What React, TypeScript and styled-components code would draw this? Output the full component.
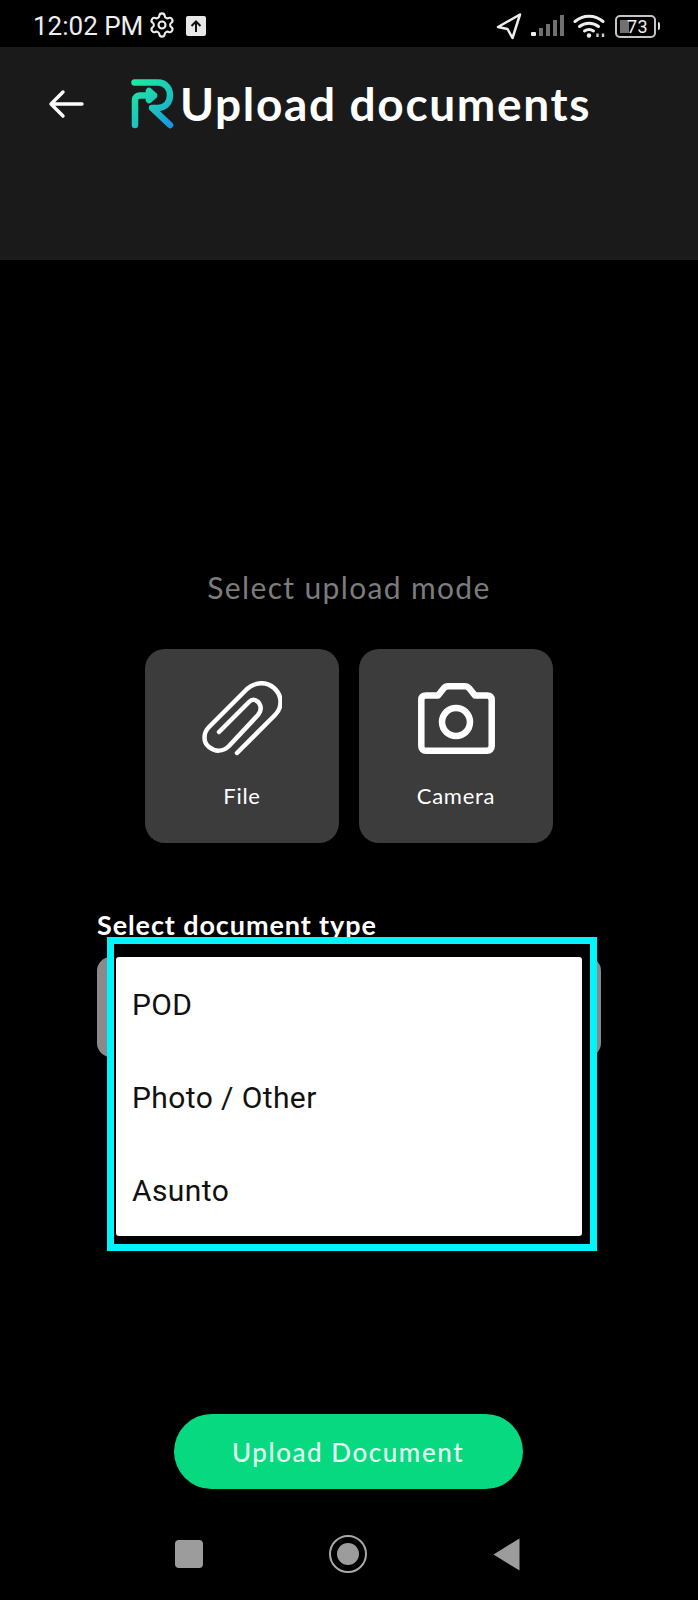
import styled, {createGlobalStyle} from "styled-components";
import {Settings} from "lucide-react";

const GlobalStyle = createGlobalStyle`
    html, body {
        margin: 0;
        padding: 0;
        background: #000;
    }
`

const UploadBoxIcon = () => (
    <svg width="20" height="20" viewBox="0 0 20 20">
        <rect width="20" height="20" rx="2" fill="#e8e8e8"/>
        <path d="M10 16V6M5.500 10 10 5.500l4.500 4.500" fill="none" stroke="#111" strokeWidth="2"/>
    </svg>
)

const LocationIcon = () => (
    <svg width="26" height="28" viewBox="0 0 26 28" fill="none" stroke="#eee" strokeWidth="2.500" strokeLinejoin="round">
        <path d="M24 2.500 2 15l9.500 2 5 9z"/>
    </svg>
)

const SignalIcon = () => (
    <svg width="33" height="22" viewBox="0 0 33 22">
        <rect x="0" y="17" width="5" height="4" rx="1" fill="#eee"/>
        <rect x="8" y="13" width="4" height="8" fill="#707070"/>
        <rect x="15" y="9" width="4" height="12" fill="#707070"/>
        <rect x="22" y="5" width="4" height="16" fill="#707070"/>
        <rect x="29" y="0" width="4" height="21" fill="#707070"/>
    </svg>
)

const WifiIcon = () => (
    <svg width="33" height="24" viewBox="0 0 33 24" fill="none" stroke="#eee" strokeWidth="3" strokeLinecap="round">
        <path d="M2 7.500C10 .5 22 .5 30 7.500"/>
        <path d="M6.500 12.500C12 8 20 8 25.500 12.500"/>
        <path d="M11.500 17c3-2 6-2 9 0"/>
        <circle cx="16" cy="21.500" r="2.200" fill="#eee" stroke="none"/>
        <path d="M24.500 19.500v3.500M30 19.500v3.500" strokeWidth="2.400" stroke="#ccc" strokeLinecap="butt"/>
    </svg>
)

const LogoIcon = () => (
    <svg width="46" height="52" viewBox="8 7 46 52" fill="none">
        <defs>
            <linearGradient id="logoGrad" gradientUnits="userSpaceOnUse" x1="12" y1="10" x2="52" y2="56">
                <stop offset="0" stopColor="#1fe8a0"/>
                <stop offset="0.55" stopColor="#1cc6bc"/>
                <stop offset="1" stopColor="#1a8fe8"/>
            </linearGradient>
        </defs>
        <path
            d="M13.500 11.500H37C53 11.500 53 37 37 37H31L49 54M14 54V29C14 26 16 24.500 19 24.500H33M28 20L33 24.500L28 29"
            stroke="url(#logoGrad)"
            strokeWidth="6.500"
            strokeLinecap="round"
            strokeLinejoin="round"
        />
    </svg>
)

const PaperclipIcon = () => (
    <svg width="80" height="75" viewBox="-1 -1 80 75" fill="none" stroke="#fff" strokeWidth="4.500" strokeLinecap="round" strokeLinejoin="round">
        <path d="M34 71 72 33C80 25 79 13 71 6 63 -1 52 0 44 7L6 45C0 51 0 60 6 65 12 70 20 70 26 64L55 33C59 28 58 24 56 21 53 17 49 17 46 20L16 50"/>
    </svg>
)

const CameraIcon = () => (
    <svg width="77" height="71" viewBox="0 0 77 71" fill="none" stroke="#fff" strokeWidth="6.500" strokeLinejoin="round">
        <path d="M8 12.500H20L26 5C27 3.800 28 3.300 30 3.300H47C49 3.300 50 3.800 51 5L57 12.500H69C72 12.500 73.700 14 73.700 17V63C73.700 66 72 67.700 69 67.700H8C5 67.700 3.300 66 3.300 63V17C3.300 14 5 12.500 8 12.500Z"/>
        <circle cx="38" cy="39" r="14"/>
    </svg>
)

const BackArrow = () => (
    <svg width="36" height="30" viewBox="0 0 36 30" fill="none" stroke="#fff" strokeWidth="3.400" strokeLinecap="round" strokeLinejoin="round">
        <path d="M34 15H3M15 3 3 15l12 12"/>
    </svg>
)

const App = () => {
    return (
        <Page>
            <GlobalStyle/>
            <StatusBar>
                <StatusGroup>
                    <Time>12:02 PM</Time>
                    <GearIcon size={28} strokeWidth={1.8}/>
                    <UploadBoxIcon/>
                </StatusGroup>
                <StatusIcons>
                    <LocationIcon/>
                    <SignalIcon/>
                    <WifiIcon/>
                    <Battery>
                        <BatteryBody>
                            <BatteryLevel/>
                            <BatteryText>73</BatteryText>
                        </BatteryBody>
                        <BatteryCap/>
                    </Battery>
                </StatusIcons>
            </StatusBar>
            <Header>
                <BackArrow/>
                <TitleWrap>
                    <LogoIcon/>
                    <Title>Upload documents</Title>
                </TitleWrap>
            </Header>
            <Main>
                <ModeLabel>Select upload mode</ModeLabel>
                <ModeRow>
                    <ModeCard>
                        <IconSlot><PaperclipIcon/></IconSlot>
                        <ModeName>File</ModeName>
                    </ModeCard>
                    <ModeCard>
                        <IconSlot><CameraIcon/></IconSlot>
                        <ModeName>Camera</ModeName>
                    </ModeCard>
                </ModeRow>
                <FieldSection>
                    <FieldLabel>Select document type</FieldLabel>
                    <SelectField/>
                    <Highlight/>
                    <Menu>
                        <MenuItem>POD</MenuItem>
                        <MenuItem>Photo / Other</MenuItem>
                        <MenuItem>Asunto</MenuItem>
                    </Menu>
                </FieldSection>
                <UploadButton>Upload Document</UploadButton>
            </Main>
            <NavBar>
                <NavSquare/>
                <NavCircle/>
                <svg width="27" height="33" viewBox="0 0 27 33">
                    <path d="M26.500 .5v32L.5 16.500z" fill="#9c9c9c"/>
                </svg>
            </NavBar>
        </Page>
    )
}

export default App

const Page = styled.div`
    width: 698px;
    height: 1600px;
    background: #000;
    display: flex;
    flex-direction: column;
    overflow: hidden;
`
const StatusBar = styled.div`
    height: 47px;
    display: flex;
    justify-content: space-between;
    align-items: center;
    padding: 5px 38px 0 33px;
    box-sizing: border-box;
`
const StatusGroup = styled.div`
    display: flex;
    align-items: center;
`
const GearIcon = styled(Settings)`
    color: #eee;
    margin: -2px 10px 0 5px;
`
const Time = styled.span`
    color: #eee;
    font-family: Roboto, sans-serif;
    font-size: 26px;
`
const StatusIcons = styled.div`
    display: flex;
    align-items: center;
    gap: 9px;
`
const Battery = styled.div`
    display: flex;
    align-items: center;
    gap: 2px;
`
const BatteryBody = styled.div`
    position: relative;
    width: 37px;
    height: 19px;
    border: 2px solid #c4c4c4;
    border-radius: 5px;
    display: flex;
    align-items: center;
    justify-content: center;
`
const BatteryLevel = styled.div`
    position: absolute;
    left: 3px;
    top: 3px;
    bottom: 3px;
    width: 9px;
    background: #707070;
`
const BatteryText = styled.span`
    position: relative;
    margin-left: 4px;
    color: #eee;
    font-family: Roboto, sans-serif;
    font-size: 18px;
    letter-spacing: 0.5px;
`
const BatteryCap = styled.div`
    width: 2px;
    height: 8px;
    border-radius: 0 2px 2px 0;
    background: #ddd;
`
const Header = styled.header`
    height: 213px;
    background: #1a1a1a;
    display: flex;
    align-items: flex-start;
    padding: 42px 0 0 48px;
    box-sizing: border-box;
`
const TitleWrap = styled.div`
    display: flex;
    align-items: center;
    margin: -13px 0 0 45px;
`
const Title = styled.h1`
    margin: 0 0 0 5px;
    color: #fff;
    font-family: Lato, sans-serif;
    font-size: 46px;
    font-weight: 700;
    letter-spacing: 1.65px;
    white-space: nowrap;
`
const Main = styled.main`
    flex: 1;
    display: flex;
    flex-direction: column;
    align-items: center;
    padding-top: 308px;
`
const ModeLabel = styled.div`
    color: #7c7c7c;
    font-family: Lato, sans-serif;
    font-size: 30px;
    line-height: 38px;
    letter-spacing: 1.35px;
`
const ModeRow = styled.div`
    display: flex;
    gap: 20px;
    margin-top: 43px;
`
const ModeCard = styled.div`
    width: 194px;
    height: 194px;
    border-radius: 20px;
    background: #3c3c3c;
    display: flex;
    flex-direction: column;
    align-items: center;
    padding-top: 33px;
    box-sizing: border-box;
`
const IconSlot = styled.div`
    height: 73px;
    display: flex;
    align-items: center;
    justify-content: center;
`
const ModeName = styled.span`
    margin-top: 27px;
    color: #fff;
    font-family: Lato, sans-serif;
    font-size: 22px;
    letter-spacing: 0.7px;
`
const FieldSection = styled.div`
    position: relative;
    align-self: flex-start;
    width: 504px;
    margin: 68px 0 0 97px;
`
const FieldLabel = styled.div`
    color: #fff;
    font-family: Lato, sans-serif;
    font-size: 27px;
    font-weight: 700;
    line-height: 28px;
    letter-spacing: 0.9px;
`
const SelectField = styled.div`
    height: 100px;
    margin-top: 18px;
    border-radius: 14px;
    background: #8a8a8a;
`
const Highlight = styled.div`
    position: absolute;
    left: 10px;
    top: 26px;
    width: 490px;
    height: 314px;
    border: 7px solid #00f5fa;
    background: #000;
    box-sizing: border-box;
`
const Menu = styled.ul`
    position: absolute;
    left: 19px;
    top: 46px;
    width: 466px;
    height: 279px;
    margin: 0;
    padding: 0;
    list-style: none;
    background: #fff;
    border-radius: 3px;
    display: flex;
    flex-direction: column;
`
const MenuItem = styled.li`
    flex: 1;
    display: flex;
    align-items: center;
    padding: 2px 0 0 16px;
    color: #111;
    font-family: Roboto, sans-serif;
    font-size: 30px;
    letter-spacing: 0.4px;
`
const UploadButton = styled.button`
    width: 349px;
    height: 75px;
    margin: 357px 2px 0 0;
    border: none;
    border-radius: 38px;
    background: #06d97f;
    color: #e4fff2;
    font-family: Lato, sans-serif;
    font-size: 26px;
    font-weight: 500;
    letter-spacing: 1.55px;
`
const NavBar = styled.nav`
    height: 111px;
    display: flex;
    justify-content: space-between;
    align-items: center;
    padding: 19px 178px 0 175px;
    box-sizing: border-box;
    flex-shrink: 0;
`
const NavSquare = styled.div`
    width: 28px;
    height: 28px;
    border-radius: 4px;
    background: #9c9c9c;
`
const NavCircle = styled.div`
    width: 38px;
    height: 38px;
    border-radius: 50%;
    border: 2px solid #a8a8a8;
    box-sizing: border-box;
    display: flex;
    &::after {
        content: "";
        width: 22px;
        height: 22px;
        margin: auto;
        border-radius: 50%;
        background: #9c9c9c;
    }
`
